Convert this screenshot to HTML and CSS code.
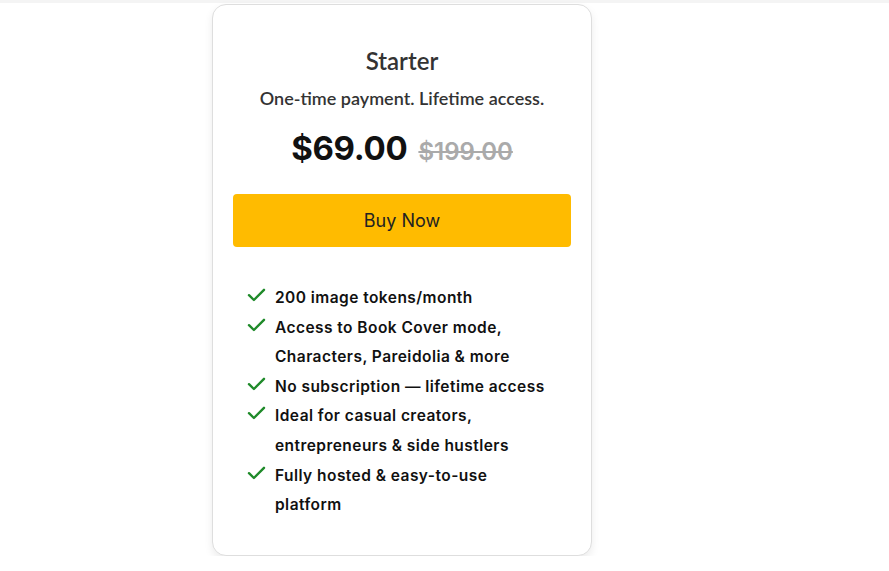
FILE: index.html
```html
<!DOCTYPE html>
<html lang="en">
<head>
<meta charset="utf-8">
<title>Starter</title>
<link rel="stylesheet" href="styles.css">
</head>
<body>
<div class="topbar"></div>
<main class="page">
  <section class="card">
    <h2 class="title">Starter</h2>
    <p class="subtitle">One-time payment. Lifetime access.</p>
    <div class="price">
      <span class="now">$69.00</span>
      <span class="was">$199.00</span>
    </div>
    <a class="buy" href="#">Buy Now</a>
    <ul class="features">
      <li><svg class="check" viewBox="0 0 18 14"><path d="M1.5 7.2 L6.4 12 L16.5 1.8" fill="none" stroke="#1f8a2a" stroke-width="2.4" stroke-linecap="round" stroke-linejoin="round"/></svg><span>200 image tokens/month</span></li>
      <li><svg class="check" viewBox="0 0 18 14"><path d="M1.5 7.2 L6.4 12 L16.5 1.8" fill="none" stroke="#1f8a2a" stroke-width="2.4" stroke-linecap="round" stroke-linejoin="round"/></svg><span>Access to Book Cover mode, Characters, Pareidolia &amp; more</span></li>
      <li><svg class="check" viewBox="0 0 18 14"><path d="M1.5 7.2 L6.4 12 L16.5 1.8" fill="none" stroke="#1f8a2a" stroke-width="2.4" stroke-linecap="round" stroke-linejoin="round"/></svg><span>No subscription — lifetime access</span></li>
      <li><svg class="check" viewBox="0 0 18 14"><path d="M1.5 7.2 L6.4 12 L16.5 1.8" fill="none" stroke="#1f8a2a" stroke-width="2.4" stroke-linecap="round" stroke-linejoin="round"/></svg><span>Ideal for casual creators, entrepreneurs &amp; side hustlers</span></li>
      <li><svg class="check" viewBox="0 0 18 14"><path d="M1.5 7.2 L6.4 12 L16.5 1.8" fill="none" stroke="#1f8a2a" stroke-width="2.4" stroke-linecap="round" stroke-linejoin="round"/></svg><span>Fully hosted &amp; easy-to-use platform</span></li>
    </ul>
  </section>
</main>
</body>
</html>
```
FILE: styles.css
```css
html, body {
  margin: 0;
  padding: 0;
  background: #ffffff;
}
.topbar {
  height: 3px;
  background: #f4f4f4;
}
.page {
  padding: 1px 0 0 212px;
}
.card {
  box-sizing: border-box;
  width: 380px;
  background: #fff;
  border: 1px solid #dedede;
  border-radius: 14px;
  box-shadow: 0 4px 8px rgba(0,0,0,0.08);
  padding: 41px 20px 35px 20px;
  text-align: center;
}
.title {
  margin: 0;
  font-family: Lato, "Open Sans", sans-serif;
  font-weight: 600;
  font-size: 24px;
  line-height: 29px;
  color: #333;
}
.subtitle {
  margin: 12px 0 0;
  font-family: Lato, "Open Sans", sans-serif;
  font-weight: 600;
  font-size: 18px;
  line-height: 22px;
  color: #333;
}
.price {
  margin-top: 19px;
  display: flex;
  justify-content: center;
  align-items: baseline;
  gap: 11px;
  font-family: Inter, "Noto Sans", sans-serif;
  line-height: 40px;
}
.now {
  font-size: 33px;
  font-weight: 700;
  color: #111;
  letter-spacing: -0.3px;
}
.was {
  font-size: 24px;
  font-weight: 600;
  color: #aaa;
  text-decoration: line-through;
  text-decoration-thickness: 2px;
}
.buy {
  display: block;
  margin-top: 22px;
  height: 53px;
  line-height: 53px;
  background: #ffbb00;
  border-radius: 4px;
  color: #222;
  text-decoration: none;
  font-family: Inter, "Noto Sans", sans-serif;
  font-size: 18px;
  font-weight: 400;
}
.features {
  list-style: none;
  margin: 36px 0 0;
  padding: 0 0 0 14px;
  text-align: left;
  font-family: Inter, "Noto Sans", sans-serif;
  font-size: 15.5px;
  font-weight: 600;
  line-height: 29.6px;
  color: #111;
}
.features li {
  display: flex;
  align-items: flex-start;
  gap: 9px;
}
.features span {
  width: 272px;
  letter-spacing: 0.45px;
}
.check {
  flex: none;
  width: 19px;
  height: 14px;
  margin-top: 5px;
}
```
